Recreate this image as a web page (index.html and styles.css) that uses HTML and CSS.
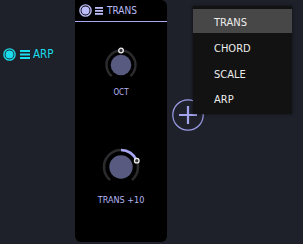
FILE: index.html
```html
<!DOCTYPE html>
<html lang="en">

<head>
    <meta charset="UTF-8">
    <meta name="viewport" content="width=device-width, initial-scale=1.0">
    <title>Chain Editor</title>
    <link rel="stylesheet" href="styles.css">
</head>

<body>
    <div class="rack">
        <div class="chain-label">
            <svg class="power" width="13" height="13" viewBox="0 0 13 13">
                <circle cx="6.5" cy="6.5" r="5.6" fill="none" stroke="currentColor" stroke-width="1.4" />
                <circle cx="6.5" cy="6.5" r="4" fill="currentColor" />
            </svg>
            <svg class="menu-icon" width="10" height="9" viewBox="0 0 10 9">
                <rect x="0" y="0" width="10" height="2" fill="currentColor" />
                <rect x="0" y="3.5" width="10" height="2" fill="currentColor" />
                <rect x="0" y="7" width="10" height="2" fill="currentColor" />
            </svg>
            <span>ARP</span>
        </div>

        <div class="module">
            <div class="module-head">
                <svg class="power" width="13" height="13" viewBox="0 0 13 13">
                    <circle cx="6.5" cy="6.5" r="5.6" fill="none" stroke="currentColor" stroke-width="1.4" />
                    <circle cx="6.5" cy="6.5" r="4" fill="currentColor" />
                </svg>
                <svg class="menu-icon" width="8" height="8" viewBox="0 0 8 8">
                    <rect x="0" y="0" width="8" height="1.8" fill="currentColor" />
                    <rect x="0" y="3" width="8" height="1.8" fill="currentColor" />
                    <rect x="0" y="6" width="8" height="1.8" fill="currentColor" />
                </svg>
                <span>TRANS</span>
            </div>

            <div class="knob knob-oct">
                <svg width="44" height="44" viewBox="0 0 44 44">
                    <path d="M12.68 33.11 A14.5 14.5 0 1 1 31.32 33.11" fill="none" stroke="#2b2b2e" stroke-width="2.4" />
                    <circle cx="22" cy="22" r="10.3" fill="#595a80" />
                    <circle cx="22" cy="7.5" r="2.3" fill="#3a3a3e" stroke="#eeeeee" stroke-width="1.3" />
                </svg>
                <div class="knob-label small">OCT</div>
            </div>

            <div class="knob knob-trans">
                <svg width="48" height="48" viewBox="0 0 48 48">
                    <path d="M13.07 37.02 A17 17 0 1 1 34.93 37.02" fill="none" stroke="#2b2b2e" stroke-width="2.6" />
                    <path d="M24 7 A17 17 0 0 1 39.76 17.63" fill="none" stroke="#a6a6f2" stroke-width="2.6" />
                    <circle cx="24" cy="24" r="11.7" fill="#595a80" />
                    <circle cx="39.76" cy="17.63" r="2.3" fill="#3a3a3e" stroke="#eeeeee" stroke-width="1.3" />
                </svg>
                <div class="knob-label">TRANS +10</div>
            </div>
        </div>

        <button class="add-btn">
            <svg width="32" height="32" viewBox="0 0 32 32">
                <circle cx="16" cy="16" r="15.2" fill="none" stroke="#9c9ce8" stroke-width="1.2" />
                <path d="M7 16 H25 M16 7 V25" stroke="#a4a4ee" stroke-width="2.2" />
            </svg>
        </button>
    </div>

    <ul class="module-menu">
        <li class="active">TRANS</li>
        <li>CHORD</li>
        <li>SCALE</li>
        <li>ARP</li>
    </ul>
</body>

</html>
```

FILE: styles.css
```css
body {
    margin: 0;
    width: 303px;
    height: 244px;
    overflow: hidden;
    position: relative;
    background-color: #1e212a;
    font-family: 'DejaVu Sans Condensed', 'DejaVu Sans', sans-serif;
    font-stretch: condensed;
}

.rack {
    display: flex;
    align-items: flex-start;
    height: 244px;
}

.chain-label {
    display: flex;
    align-items: center;
    gap: 3px;
    width: 72px;
    margin-left: 3px;
    margin-top: 47px;
    color: #1adcec;
    font-size: 11.5px;
}

.chain-label .menu-icon {
    margin-left: 1px;
}

.module {
    width: 92px;
    height: 242px;
    background-color: #000;
    border-radius: 0 6px 6px 6px;
    display: flex;
    flex-direction: column;
    align-items: center;
}

.module-head {
    align-self: stretch;
    display: flex;
    align-items: center;
    gap: 3px;
    height: 21px;
    padding-left: 4px;
    border-bottom: 1px solid #a9a9f2;
    color: #bcbcf8;
    font-size: 10px;
}

.module-head span {
    margin-left: 1px;
}

.power,
.menu-icon {
    display: block;
    flex: none;
}

.knob {
    display: flex;
    flex-direction: column;
    align-items: center;
}

.knob svg {
    display: block;
}

.knob-oct {
    margin-top: 21px;
}

.knob-trans {
    margin-top: 45px;
}

.knob-label {
    color: #b6b6f6;
    font-size: 9px;
    line-height: 10px;
    margin-top: 4px;
}

.knob-label.small {
    font-size: 8px;
    margin-top: 1px;
}

.add-btn {
    margin: 99px 0 0 5px;
    padding: 0;
    border: none;
    background: none;
    width: 32px;
    height: 32px;
}

.add-btn svg {
    display: block;
}

.module-menu {
    position: absolute;
    left: 193px;
    top: 6px;
    width: 99px;
    height: 108px;
    margin: 0;
    padding: 3px 0 0;
    box-sizing: border-box;
    list-style: none;
    background-color: #121212;
    box-shadow: 0 0 3px rgba(0, 0, 0, 0.6);
}

.module-menu li {
    box-sizing: border-box;
    height: 25.7px;
    line-height: 25.7px;
    padding: 1.5px 0 0 21px;
    color: #ececec;
    font-size: 11px;
}

.module-menu li.active {
    background-color: #474747;
    height: 23.5px;
    line-height: 23.5px;
    margin-bottom: 2px;
}
```
